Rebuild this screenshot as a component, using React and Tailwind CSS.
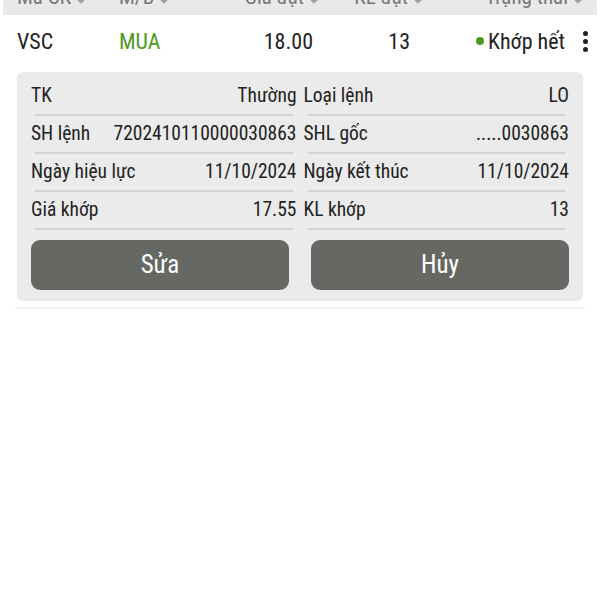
import React from "react";

const cols = [
  { label: "Mã CK", w: "w-[102px]", align: "justify-start" },
  { label: "M/B", w: "w-[110px]", align: "justify-start" },
  { label: "Giá đặt", w: "w-[92px]", align: "justify-end" },
  { label: "KL đặt", w: "w-[104px]", align: "justify-end" },
  { label: "Trạng thái", w: "w-[160px]", align: "justify-end" },
];

const details = [
  ["TK", "Thường", "Loại lệnh", "LO"],
  ["SH lệnh", "7202410110000030863", "SHL gốc", ".....0030863"],
  ["Ngày hiệu lực", "11/10/2024", "Ngày kết thúc", "11/10/2024"],
  ["Giá khớp", "17.55", "KL khớp", "13"],
];

function Diamond() {
  return (
    <svg width="14" height="14" viewBox="0 0 12 12" className="ml-[3px] shrink-0">
      <path d="M6 1 L11 6 L6 11 L1 6 Z" fill="#a0a0a0" />
    </svg>
  );
}

function Cell({ label, value }) {
  return (
    <div className="flex flex-col">
      <div className="h-[36px] flex items-center justify-between whitespace-nowrap">
        <span>{label}</span>
        <span>{value}</span>
      </div>
      <div className="mx-[4px] h-[2px] bg-[#d3d3d3]" />
    </div>
  );
}

export default function App() {
  return (
    <div className="w-[600px] h-[600px] bg-white overflow-hidden text-[#222] font-['Roboto','Liberation_Sans',sans-serif] [font-stretch:condensed]">
      {/* Table header (scrolled mostly out of view) */}
      <div className="mx-[3px] h-[15px] bg-[#e9e9e9] overflow-hidden">
        <div className="-mt-[17px] h-[29px] flex items-center pl-[14px] text-[21px] text-[#777] whitespace-nowrap">
          {cols.map((c) => (
            <div key={c.label} className={`${c.w} shrink-0 flex items-center ${c.align}`}>
              <span>{c.label}</span>
              <Diamond />
            </div>
          ))}
        </div>
      </div>

      {/* Order row */}
      <div className="h-[52px] flex items-center pl-[17px] text-[22px] whitespace-nowrap">
        <div className="w-[102px] shrink-0">VSC</div>
        <div className="w-[110px] shrink-0 text-[#4d9a20]">MUA</div>
        <div className="w-[84px] shrink-0 text-right">18.00</div>
        <div className="w-[97px] shrink-0 text-right">13</div>
        <div className="w-[155px] shrink-0 flex items-center justify-end">
          <span className="w-[8px] h-[8px] rounded-full bg-[#4d9a20] mr-[4px]" />
          <span>Khớp hết</span>
        </div>
        <div className="ml-[10px] w-[20px] shrink-0 flex flex-col items-center gap-[3px]">
          <span className="w-[5px] h-[5px] rounded-full bg-[#222]" />
          <span className="w-[5px] h-[5px] rounded-full bg-[#222]" />
          <span className="w-[5px] h-[5px] rounded-full bg-[#222]" />
        </div>
      </div>

      {/* Expanded detail card */}
      <div className="mx-[17px] mt-[5px] rounded-[6px] bg-[#ebebeb] px-[14px] pt-[6px] pb-[11px] text-[19.5px]">
        <div className="grid grid-cols-2 gap-x-[7px]">
          {details.map(([l1, v1, l2, v2]) => (
            <React.Fragment key={l1}>
              <Cell label={l1} value={v1} />
              <Cell label={l2} value={v2} />
            </React.Fragment>
          ))}
        </div>
        <div className="mt-[10px] grid grid-cols-2 gap-x-[22px]">
          <button className="h-[50px] rounded-[9px] bg-[#666864] text-white text-[25px]">Sửa</button>
          <button className="h-[50px] rounded-[9px] bg-[#666864] text-white text-[25px]">Hủy</button>
        </div>
      </div>

      <div className="mx-[15px] mt-[6px] h-[2px] bg-[#efefef]" />
    </div>
  );
}
